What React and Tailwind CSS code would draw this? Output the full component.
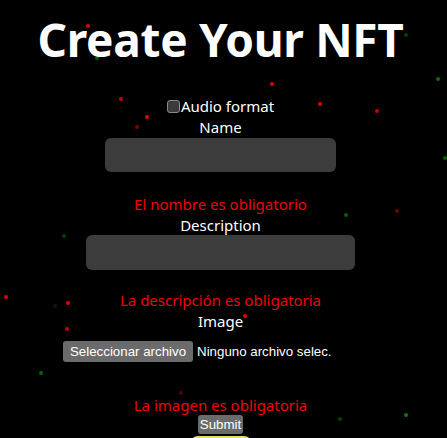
import React from 'react';

const dots = [
    { x: 88, y: 26, c: 'bg-[#e00000]' },
    { x: 272, y: 84, c: 'bg-[#e00000]' },
    { x: 320, y: 104, c: 'bg-[#e00000]' },
    { x: 121, y: 99, c: 'bg-[#c00000]' },
    { x: 147, y: 117, c: 'bg-[#e00000]' },
    { x: 137, y: 127, c: 'bg-[#800000]' },
    { x: 377, y: 111, c: 'bg-[#c00000]' },
    { x: 6, y: 297, c: 'bg-[#e00000]' },
    { x: 68, y: 303, c: 'bg-[#e00000]' },
    { x: 245, y: 316, c: 'bg-[#e00000]' },
    { x: 67, y: 329, c: 'bg-[#c00000]' },
    { x: 181, y: 393, c: 'bg-[#500000]' },
    { x: 397, y: 211, c: 'bg-[#700000]' },
    { x: 97, y: 58, c: 'bg-[#006000]' },
    { x: 406, y: 35, c: 'bg-[#004000]' },
    { x: 438, y: 79, c: 'bg-[#007000]' },
    { x: 445, y: 158, c: 'bg-[#006000]' },
    { x: 346, y: 215, c: 'bg-[#006000]' },
    { x: 64, y: 236, c: 'bg-[#004000]' },
    { x: 41, y: 373, c: 'bg-[#006000]' },
    { x: 340, y: 419, c: 'bg-[#004000]' },
    { x: 406, y: 415, c: 'bg-[#008000]' },
    { x: 55, y: 306, c: 'bg-[#002000]' },
];

const App = () => {
    return (
        <div className="relative w-[447px] h-[438px] overflow-hidden bg-black text-white font-['Noto_Sans',sans-serif]">
            {dots.map((d, i) => (
                <span
                    key={i}
                    className={`absolute w-[4px] h-[4px] rounded-full ${d.c}`}
                    style={{ left: d.x - 2, top: d.y - 2 }}
                />
            ))}

            <div className="relative w-[441px] flex flex-col items-center">
                <h1 className="mt-[9px] text-[46px] leading-[60px] font-bold tracking-[-0.3px]">Create Your NFT</h1>

                <label className="mt-[27px] flex items-center text-[15px] leading-[21px]">
                    <span className="w-[13px] h-[13px] rounded-[3px] border border-[#8a8a8a] bg-[#3b3b3b] mr-px" />
                    Audio format
                </label>
                <div className="text-[15px] leading-[21px]">Name</div>
                <div className="w-[231px] h-[34px] rounded-[6px] bg-[#3c3c3c]" />

                <div className="mt-[22px] text-[15px] leading-[21px] text-[#f00000]">El nombre es obligatorio</div>
                <div className="text-[15px] leading-[21px]">Description</div>
                <div className="-mt-[1px] w-[269px] h-[35px] rounded-[6px] bg-[#3c3c3c]" />

                <div className="mt-[20px] text-[15px] leading-[21px] text-[#f00000]">La descripción es obligatoria</div>
                <div className="text-[15px] leading-[21px]">Image</div>

                <div className="mt-[9px] w-[315px] flex items-center font-['Liberation_Sans',Arial,sans-serif] text-[13.3px]">
                    <span className="px-[7px] h-[21px] leading-[21px] rounded-[3px] bg-[#6b6b6b] text-white">Seleccionar archivo</span>
                    <span className="ml-[4px]">Ninguno archivo selec.</span>
                </div>

                <div className="mt-[33px] text-[15px] leading-[21px] text-[#f00000]">La imagen es obligatoria</div>
                <div className="-mt-[1px] px-[2px] h-[19px] leading-[19px] rounded-[3px] bg-[#6b6b6b] font-['Liberation_Sans',Arial,sans-serif] text-[13.3px]">Submit</div>
                <div className="mt-[2px] w-[62px] h-[10px] rounded-t-[8px] bg-[#e3de6a]" />
            </div>
        </div>
    );
};

export default App;
